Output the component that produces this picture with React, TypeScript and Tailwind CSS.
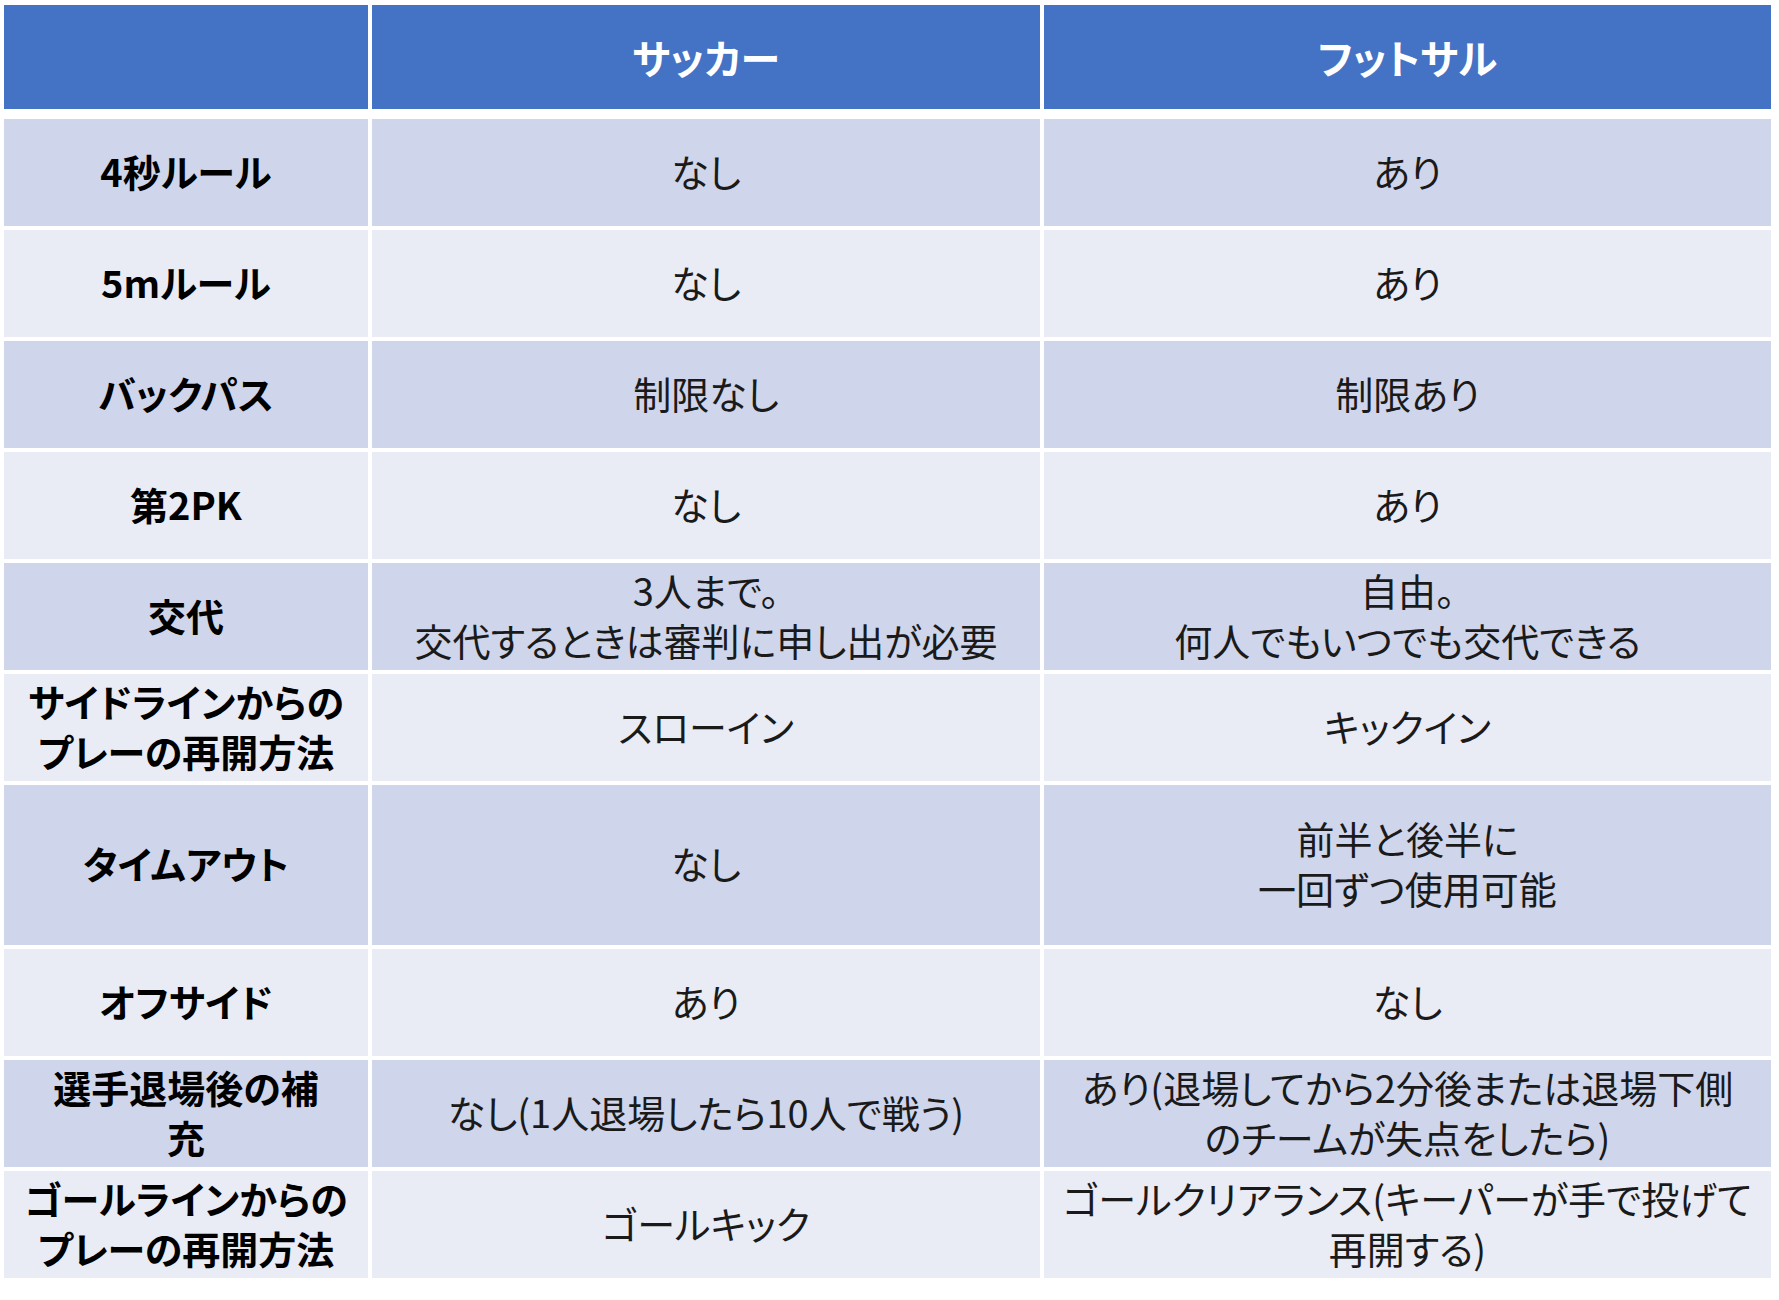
import React from 'react';

interface RuleRow {
  label: string[];
  soccer: string[];
  futsal: string[];
  tall?: boolean;
}

const rows: RuleRow[] = [
  { label: ['4秒ルール'], soccer: ['なし'], futsal: ['あり'] },
  { label: ['5mルール'], soccer: ['なし'], futsal: ['あり'] },
  { label: ['バックパス'], soccer: ['制限なし'], futsal: ['制限あり'] },
  { label: ['第2PK'], soccer: ['なし'], futsal: ['あり'] },
  {
    label: ['交代'],
    soccer: ['3人まで。', '交代するときは審判に申し出が必要'],
    futsal: ['自由。', '何人でもいつでも交代できる'],
  },
  { label: ['サイドラインからの', 'プレーの再開方法'], soccer: ['スローイン'], futsal: ['キックイン'] },
  { label: ['タイムアウト'], soccer: ['なし'], futsal: ['前半と後半に', '一回ずつ使用可能'], tall: true },
  { label: ['オフサイド'], soccer: ['あり'], futsal: ['なし'] },
  {
    label: ['選手退場後の補', '充'],
    soccer: ['なし(1人退場したら10人で戦う)'],
    futsal: ['あり(退場してから2分後または退場下側', 'のチームが失点をしたら)'],
  },
  {
    label: ['ゴールラインからの', 'プレーの再開方法'],
    soccer: ['ゴールキック'],
    futsal: ['ゴールクリアランス(キーパーが手で投げて', '再開する)'],
  },
];

const Lines: React.FC<{ lines: string[] }> = ({ lines }) => (
  <>
    {lines.map((line, i) => (
      <span key={i} className="block whitespace-nowrap">
        {line}
      </span>
    ))}
  </>
);

const App: React.FC = () => {
  return (
    <div className="min-h-screen bg-white pl-[4px] pt-[5px] font-['Noto_Sans_CJK_JP','Noto_Sans',sans-serif] [font-feature-settings:'palt']">
      {/* ヘッダー */}
      <div className="grid grid-cols-[364px_668px_727px] gap-x-[4px] h-[104px] text-white font-bold text-[40px] leading-[1.2]">
        <div className="bg-[#4472c4]" />
        <div className="bg-[#4472c4] flex items-center justify-center">サッカー</div>
        <div className="bg-[#4472c4] flex items-center justify-center">フットサル</div>
      </div>

      <div className="mt-[10px] flex flex-col gap-y-[4px]">
        {rows.map((row, i) => {
          const bg = i % 2 === 0 ? 'bg-[#cfd5ea]' : 'bg-[#e9ebf5]';
          return (
            <div
              key={i}
              className={`grid grid-cols-[364px_668px_727px] gap-x-[4px] text-[38px] leading-[50px] ${
                row.tall ? 'h-[160px]' : 'h-[107px]'
              }`}
            >
              <div className={`${bg} flex flex-col items-center justify-center pb-[4px] text-center font-bold text-black`}>
                <Lines lines={row.label} />
              </div>
              <div className={`${bg} flex flex-col items-center justify-center pb-[4px] text-center text-[#1a1a1a]`}>
                <Lines lines={row.soccer} />
              </div>
              <div className={`${bg} flex flex-col items-center justify-center pb-[4px] text-center text-[#1a1a1a]`}>
                <Lines lines={row.futsal} />
              </div>
            </div>
          );
        })}
      </div>
    </div>
  );
};

export default App;
